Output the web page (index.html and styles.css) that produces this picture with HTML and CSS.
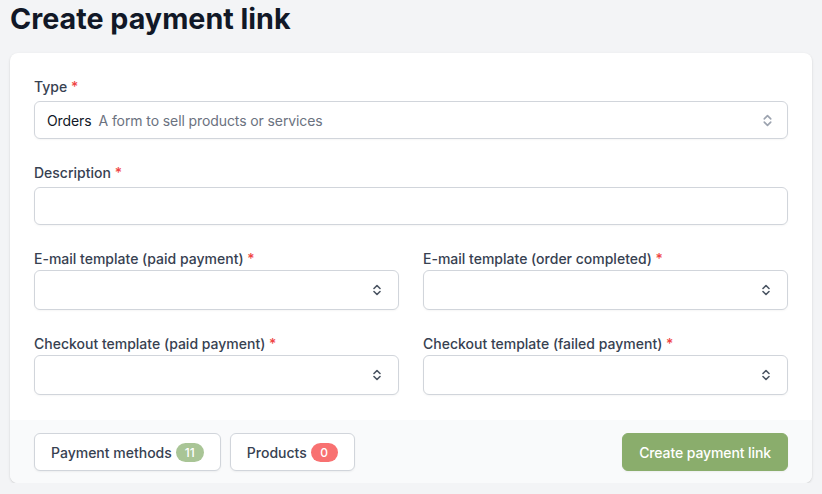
FILE: index.html
```html
<!DOCTYPE html>
<html lang="en">
<head>
    <meta charset="UTF-8">
    <meta name="viewport" content="width=device-width, initial-scale=1.0">
    <title>Create payment link</title>
    <link rel="stylesheet" href="styles.css">
</head>
<body>
    <h1>Create payment link</h1>

    <form class="card">
        <div class="card-body">
            <div class="field">
                <label>Type <span class="req">*</span></label>
                <div class="select select-type">
                    <span class="value">Orders</span>
                    <span class="hint">A form to sell products or services</span>
                    <svg class="chevrons light" viewBox="0 0 8 12" width="9" height="13"><path d="M1 4.5 4 1.5 7 4.5M1 7.5 4 10.5 7 7.5" fill="none" stroke="currentColor" stroke-width="1.5" stroke-linecap="round" stroke-linejoin="round"/></svg>
                </div>
            </div>

            <div class="field">
                <label for="description">Description <span class="req">*</span></label>
                <input type="text" id="description">
            </div>

            <div class="grid">
                <div class="field tight">
                    <label>E-mail template (paid payment) <span class="req">*</span></label>
                    <div class="select">
                        <svg class="chevrons" viewBox="0 0 8 12" width="8" height="12"><path d="M1 4.5 4 1.5 7 4.5M1 7.5 4 10.5 7 7.5" fill="none" stroke="currentColor" stroke-width="1.6" stroke-linecap="round" stroke-linejoin="round"/></svg>
                    </div>
                </div>
                <div class="field tight">
                    <label>E-mail template (order completed) <span class="req">*</span></label>
                    <div class="select">
                        <svg class="chevrons" viewBox="0 0 8 12" width="8" height="12"><path d="M1 4.5 4 1.5 7 4.5M1 7.5 4 10.5 7 7.5" fill="none" stroke="currentColor" stroke-width="1.6" stroke-linecap="round" stroke-linejoin="round"/></svg>
                    </div>
                </div>
                <div class="field tight">
                    <label>Checkout template (paid payment) <span class="req">*</span></label>
                    <div class="select">
                        <svg class="chevrons" viewBox="0 0 8 12" width="8" height="12"><path d="M1 4.5 4 1.5 7 4.5M1 7.5 4 10.5 7 7.5" fill="none" stroke="currentColor" stroke-width="1.6" stroke-linecap="round" stroke-linejoin="round"/></svg>
                    </div>
                </div>
                <div class="field tight">
                    <label>Checkout template (failed payment) <span class="req">*</span></label>
                    <div class="select">
                        <svg class="chevrons" viewBox="0 0 8 12" width="8" height="12"><path d="M1 4.5 4 1.5 7 4.5M1 7.5 4 10.5 7 7.5" fill="none" stroke="currentColor" stroke-width="1.6" stroke-linecap="round" stroke-linejoin="round"/></svg>
                    </div>
                </div>
            </div>
        </div>

        <div class="card-footer">
            <button type="button" class="btn">Payment methods <span class="badge green">11</span></button>
            <button type="button" class="btn">Products <span class="badge red">0</span></button>
            <button type="submit" class="btn primary">Create payment link</button>
        </div>
    </form>
</body>
</html>
```

FILE: styles.css
```css
body {
    font-family: Inter, 'Noto Sans', sans-serif;
    margin: 0;
    padding: 0 10px;
    background-color: #f3f4f6;
    color: #111827;
}
h1 {
    margin: 1px 0 16px;
    font-size: 28.7px;
    line-height: 36px;
    font-weight: 700;
}
.card {
    background: #ffffff;
    border-radius: 8px;
    box-shadow: 0 1px 3px rgba(0, 0, 0, 0.1), 0 1px 2px rgba(0, 0, 0, 0.06);
    overflow: hidden;
}
.card-body {
    padding: 24px 24px 25px;
    display: flex;
    flex-direction: column;
    gap: 24px;
}
.field label {
    display: block;
    font-size: 14px;
    line-height: 20px;
    font-weight: 500;
    color: #374151;
    margin-bottom: 4px;
}
.field.tight label {
    margin-bottom: 1px;
}
.req {
    color: #ef4444;
}
input[type="text"],
.select {
    width: 100%;
    height: 38px;
    box-sizing: border-box;
    border: 1px solid #d1d5db;
    border-radius: 6px;
    background: #ffffff;
    font-family: inherit;
    font-size: 14px;
    box-shadow: 0 1px 2px rgba(0, 0, 0, 0.04);
}
.select {
    display: flex;
    align-items: center;
    gap: 7px;
    padding: 0 12px;
}
.field.tight .select {
    height: 40px;
    padding-right: 17px;
}
.select .value {
    color: #111827;
    letter-spacing: -0.1px;
}
.select .hint {
    color: #6b7280;
    letter-spacing: -0.1px;
}
.chevrons {
    margin-left: auto;
    color: #4b5563;
}
.chevrons.light {
    color: #9ca3af;
    margin-right: 3px;
}
.grid {
    display: grid;
    grid-template-columns: 1fr 1fr;
    column-gap: 24px;
    row-gap: 24px;
}
.card-footer {
    background: #f9fafb;
    padding: 13px 24px 12px;
    display: flex;
    gap: 9px;
}
.btn {
    height: 38px;
    padding: 0 16px;
    display: flex;
    align-items: center;
    gap: 4px;
    border: 1px solid #d1d5db;
    border-radius: 6px;
    background: #ffffff;
    color: #374151;
    font-family: inherit;
    font-size: 14px;
    font-weight: 500;
    box-shadow: 0 1px 2px rgba(0, 0, 0, 0.05);
}
.btn.primary {
    margin-left: auto;
    background: #8aad6c;
    border-color: #8aad6c;
    color: #ffffff;
    padding: 0 16px;
    letter-spacing: -0.1px;
}
.badge {
    display: inline-block;
    min-width: 12px;
    padding: 0 8px;
    border-radius: 999px;
    font-size: 12px;
    line-height: 19px;
    color: #ffffff;
    text-align: center;
}
.badge.green {
    background: #a9c596;
}
.badge.red {
    background: #f87171;
    min-width: 11px;
}
```
